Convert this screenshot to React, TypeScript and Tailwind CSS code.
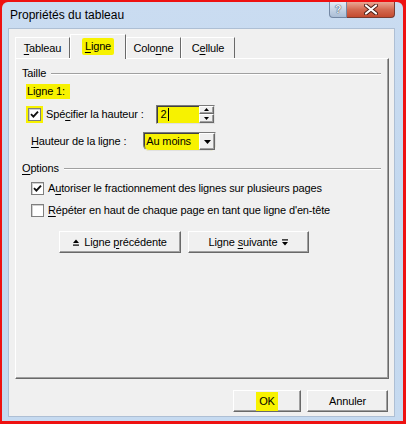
import React from 'react'

function U({ children }: { children: React.ReactNode }) {
  return <span className="underline decoration-1 underline-offset-[2px]">{children}</span>
}

function Check({ checked }: { checked?: boolean }) {
  return (
    <span className="w-[13px] h-[13px] shrink-0 bg-white border border-[#7f7f7f] shadow-[inset_1px_1px_0_#d0d0d0] flex items-center justify-center">
      {checked && (
        <svg width="9" height="9" viewBox="0 0 9 9">
          <path d="M1 4.2 L3.4 6.6 L8 1.6" stroke="#111" strokeWidth="1.9" fill="none" />
        </svg>
      )}
    </span>
  )
}

const btn =
  'h-[22px] bg-[#f0f0f0] border border-t-white border-l-white border-r-[#696969] border-b-[#696969] shadow-[inset_-1px_-1px_0_#a0a0a0] flex items-center justify-center text-[11px] text-black'

function Tab({ label, active, w }: { label: React.ReactNode; active?: boolean; w: string }) {
  return (
    <div
      className={`${w} flex items-center justify-center border border-b-0 border-t-white border-l-white border-r-[#696969] bg-[#f0f0f0] ${
        active ? 'h-[25px] relative z-10 mb-[-1px] pb-[2px]' : 'h-[21px]'
      }`}
    >
      {label}
    </div>
  )
}

export default function App() {
  return (
    <div className="w-[406px] h-[424px] bg-[#ee1111] pt-[2px] pl-[2px] pr-[3px] pb-[3px] font-['Liberation_Sans',Arial,sans-serif] text-black">
      <div className="h-full flex flex-col rounded-t-[6px] bg-gradient-to-b from-[#cadcf1] via-[#c3d8ef] to-[#c6daf0]">
        {/* title bar */}
        <div className="h-[26px] flex items-start">
          <div className="pl-[8px] pt-[6px] text-[12px] leading-[14px]">Propriétés du tableau</div>
          <div className="ml-auto mr-[8px] flex h-[16px]">
            <div className="w-[18px] h-full rounded-bl-[4px] border border-t-0 border-[#7387a3] bg-gradient-to-b from-[#e3ecf6] to-[#aabdd5] flex items-center justify-center text-[11px] font-bold text-[#eef3f9] [text-shadow:0_0_1px_#2c3e58,0_0_1px_#2c3e58]">
              ?
            </div>
            <div className="w-[48px] h-full rounded-br-[4px] border border-t-0 border-l-0 border-[#7a3b30] bg-gradient-to-b from-[#e9a794] via-[#d46a51] to-[#c44a2f] flex items-center justify-center">
              <svg width="14" height="11" viewBox="0 0 14 11">
                <path d="M2 1.5 L12 9.5 M12 1.5 L2 9.5" stroke="#4a1e16" strokeWidth="4" strokeLinecap="round" />
                <path d="M2 1.5 L12 9.5 M12 1.5 L2 9.5" stroke="#fff" strokeWidth="2.2" strokeLinecap="round" />
              </svg>
            </div>
          </div>
        </div>

        {/* client area */}
        <div className="ml-[6px] mr-[8px] mb-[4px] flex-1 flex flex-col bg-[#f0f0f0] border border-[#aebfd4] text-[11px] leading-[13px] tracking-[-0.15px]">
          <div className="ml-[6px] mr-[5px] mt-[5px] flex flex-col">
            <div className="flex items-end h-[24px]">
              <Tab w="w-[55px]" label={<span><U>T</U>ableau</span>} />
              <Tab
                w="w-[56px]"
                active
                label={
                  <span className="bg-[#f7f200] px-[3px] py-[2px] rounded-[2px]">
                    <U>L</U>igne
                  </span>
                }
              />
              <Tab w="w-[55px]" label={<span>Colo<U>n</U>ne</span>} />
              <Tab w="w-[54px]" label={<span>C<U>e</U>llule</span>} />
            </div>

            {/* panel */}
            <div className="h-[321px] border border-t-white border-l-white border-r-[#696969] border-b-[#696969] shadow-[inset_-1px_-1px_0_#a0a0a0] pl-[6px] pr-[7px] pt-[8px] flex flex-col">
              <div className="flex items-center gap-[5px] h-[13px]">
                <span>Taille</span>
                <span className="flex-1 h-[2px] border-t border-t-[#a0a0a0] border-b border-b-white" />
              </div>

              <div className="mt-[4px] ml-[4px] h-[14px] flex items-center">
                <span className="bg-[#f7f200] px-[1px] pr-[5px] py-[1px]">Ligne 1:</span>
              </div>

              <div className="mt-[7px] ml-[4px] h-[18px] flex items-center">
                <span className="bg-[#f7f200] p-[2px] flex">
                  <Check checked />
                </span>
                <span className="ml-[3px]">
                  Spé<U>c</U>ifier la hauteur :
                </span>
                <div className="ml-[12px] w-[59px] h-[19px] flex bg-[#f7f200] border border-t-[#7a7a7a] border-l-[#7a7a7a] border-r-[#e0e0e0] border-b-[#e0e0e0] shadow-[inset_1px_1px_0_#404040]">
                  <div className="flex-1 flex items-center pl-[4px]">
                    2<span className="ml-[1px] w-[1px] h-[13px] bg-black" />
                  </div>
                  <div className="w-[15px] flex flex-col">
                    <div className={`${btn} h-[8px] flex-1`}>
                      <svg width="5" height="3" viewBox="0 0 5 3"><path d="M0 3 L2.5 0 L5 3 Z" fill="#000" /></svg>
                    </div>
                    <div className={`${btn} h-[8px] flex-1`}>
                      <svg width="5" height="3" viewBox="0 0 5 3"><path d="M0 0 L2.5 3 L5 0 Z" fill="#000" /></svg>
                    </div>
                  </div>
                </div>
              </div>

              <div className="mt-[9px] ml-[9px] h-[19px] flex items-center">
                <span>
                  <U>H</U>auteur de la ligne :
                </span>
                <div className="ml-[17px] w-[73px] h-[19px] flex bg-[#f7f200] border border-t-[#7a7a7a] border-l-[#7a7a7a] border-r-[#e0e0e0] border-b-[#e0e0e0] shadow-[inset_1px_1px_0_#404040] rounded-b-[6px]">
                  <div className="flex-1 flex items-center pl-[2px]">Au moins</div>
                  <div className={`${btn} w-[16px] h-full`}>
                    <svg width="7" height="4" viewBox="0 0 7 4"><path d="M0 0 L3.5 4 L7 0 Z" fill="#000" /></svg>
                  </div>
                </div>
              </div>

              <div className="mt-[11px] flex items-center gap-[5px] h-[13px]">
                <span>
                  <U>O</U>ptions
                </span>
                <span className="flex-1 h-[2px] border-t border-t-[#a0a0a0] border-b border-b-white" />
              </div>

              <div className="mt-[5px] ml-[9px] h-[16px] flex items-center gap-[4px]">
                <Check checked />
                <span>
                  A<U>u</U>toriser le fractionnement des lignes sur plusieurs pages
                </span>
              </div>
              <div className="mt-[6px] ml-[9px] h-[16px] flex items-center gap-[4px]">
                <Check />
                <span>
                  <U>R</U>épéter en haut de chaque page en tant que ligne d'en-tête
                </span>
              </div>

              <div className="mt-[13px] ml-[37px] flex gap-[7px]">
                <div className={`${btn} w-[122px] gap-[5px]`}>
                  <svg width="6" height="7" viewBox="0 0 6 7">
                    <path d="M0 4 L3 0.5 L6 4 Z" fill="#000" />
                    <rect x="0" y="5.5" width="6" height="1.2" fill="#000" />
                  </svg>
                  <span>
                    Ligne <U>p</U>récédente
                  </span>
                </div>
                <div className={`${btn} w-[121px] gap-[5px]`}>
                  <span>
                    Ligne <U>s</U>uivante
                  </span>
                  <svg width="6" height="7" viewBox="0 0 6 7">
                    <rect x="0" y="0.3" width="6" height="1.2" fill="#000" />
                    <path d="M0 3 L3 6.5 L6 3 Z" fill="#000" />
                  </svg>
                </div>
              </div>
            </div>
          </div>

          <div className="mt-auto mb-[4px] mr-[6px] flex justify-end gap-[6px]">
            <div className={`${btn} w-[68px]`}>
              <span className="bg-[#f7f200] px-[3px] py-[3px]">OK</span>
            </div>
            <div className={`${btn} w-[81px]`}>Annuler</div>
          </div>
        </div>
      </div>
    </div>
  )
}
